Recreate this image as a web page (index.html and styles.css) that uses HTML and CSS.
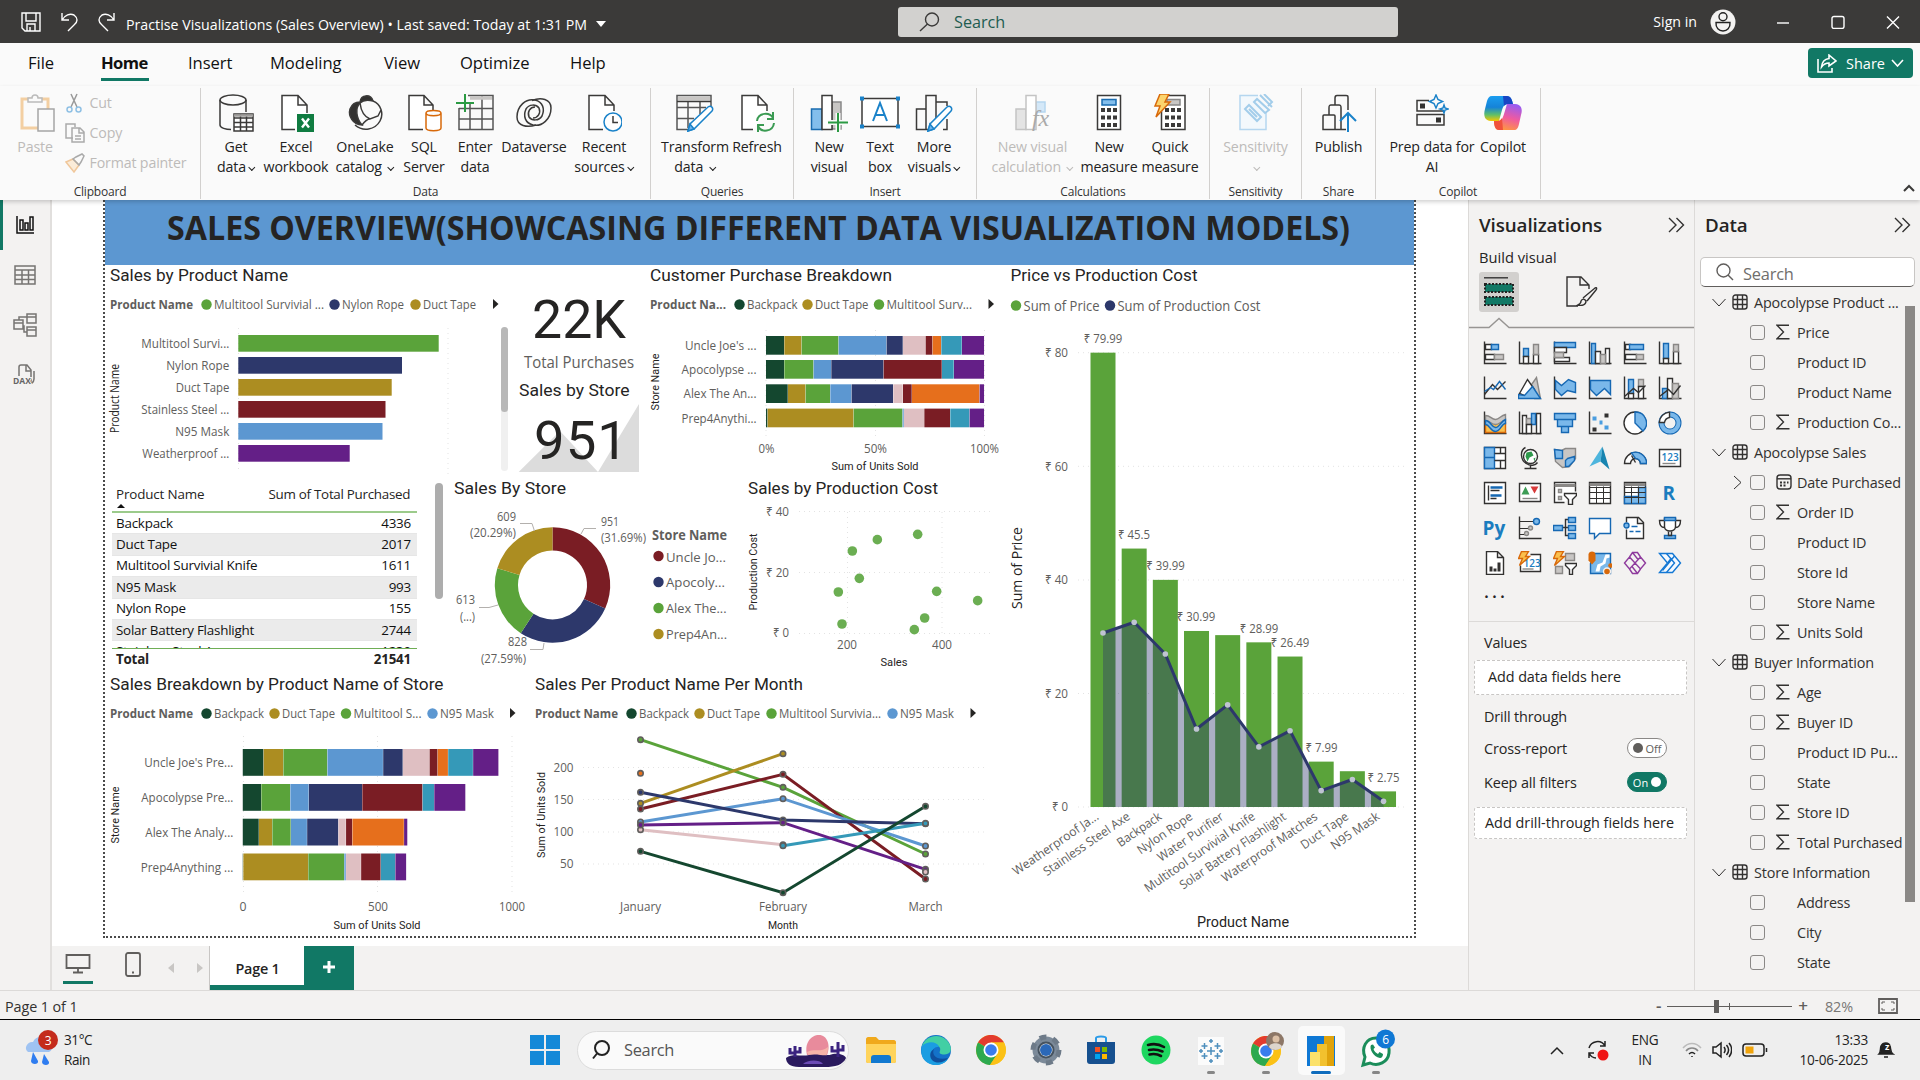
FILE: index.html
```html
<!DOCTYPE html>
<html lang="en">
<head>
<meta charset="utf-8">
<title>Practise Visualizations (Sales Overview)</title>
<link rel="stylesheet" href="styles.css">
</head>
<body>
<div class="app">
  <header class="titlebar">
    <div class="quick">
      <svg width="20" height="20" viewBox="0 0 20 20"><path d="M1 1H19V19H4L1 16ZM5 1V9H15V1M6 19V12H14V19M9 15V19"/></svg>
      <svg width="17" height="20" viewBox="0 0 17 20"><path d="M1 1V8H8M1 8C4 3 9 1 13 3C17 6 17 10 13 13L7 19"/></svg>
      <svg width="17" height="20" viewBox="0 0 17 20"><path d="M16 1V8H9M16 8C13 3 8 1 4 3C0 6 0 10 4 13L10 19"/></svg>
    </div>
    <div class="doc">Practise Visualizations (Sales Overview) • Last saved: Today at 1:31 PM <i class="tri"></i></div>
    <div class="topsearch">
      <svg width="21" height="20" viewBox="0 0 21 20"><circle cx="13" cy="7.500" r="6.500"/><path d="M8.500 12L1 19"/></svg>Search
    </div>
    <div class="account">
      <span>Sign in</span>
      <svg width="26" height="26" viewBox="0 0 26 26"><circle cx="13" cy="13" r="12.500" fill="#f3f2f1" stroke="none"/><circle cx="13" cy="7.800" r="4" stroke="#222"/><path d="M6 13.500H20C20.500 19 17 22 13 22C9 22 5.500 19 6 13.500Z" stroke="#222"/></svg>
      <svg width="14" height="14" viewBox="0 0 14 14"><path d="M1 8H13"/></svg>
      <svg width="14" height="14" viewBox="0 0 14 14"><rect x="1" y="1.500" width="12" height="12" rx="2"/></svg>
      <svg width="14" height="14" viewBox="0 0 14 14"><path d="M1 1.500L13 13.500M13 1.500L1 13.500"/></svg>
    </div>
  </header>

  <nav class="tabs">
    <span class="t-file">File</span><span class="t-home on">Home</span><span class="t-insert">Insert</span><span class="t-model">Modeling</span><span class="t-view">View</span><span class="t-opt">Optimize</span><span class="t-help">Help</span>
    <button class="share">
      <svg width="20" height="19" viewBox="0 0 20 19"><path d="M1 5V18H15V14M12 1L19 7L12 12V9C8 9 6 11 4.500 13C5 8 8 5 12 4.500Z"/></svg>Share<svg width="13" height="8" viewBox="0 0 13 8"><path d="M1 1L6.500 7L12 1"/></svg>
    </button>
  </nav>

  <section class="ribbon">
    <div class="group g-clip">
      <div class="clip">
        <div class="tool off">
          <svg width="36" height="38" viewBox="0 0 36 38"><path d="M2 5H28V34H2Z" stroke="#f3cfa2" stroke-width="3"/><path d="M8 8V4H12C12 0 18 0 18 4H22V8Z" stroke="#bbb" fill="#fafafa"/><path d="M18 15H34V37H18Z" stroke="#a5a5a5" fill="#fafafa"/></svg>
          <span>Paste</span>
        </div>
        <div class="cliplist">
          <div><svg width="20" height="20" viewBox="0 0 20 20"><path d="M6 1L12 14M12 1L6 14" stroke="#999"/><circle cx="4.500" cy="16.500" r="2.500" stroke="#8fc0e4"/><circle cx="13.500" cy="16.500" r="2.500" stroke="#8fc0e4"/></svg>Cut</div>
          <div><svg width="20" height="20" viewBox="0 0 20 20"><path d="M8 15H1V1H10V4M7 5H15L19 9V19H7ZM14 5V10H19M10 13H16M10 16H16" stroke="#aaa"/></svg>Copy</div>
          <div><svg width="20" height="20" viewBox="0 0 20 20"><path d="M1 9L8 6L14 12L9 19Z" stroke="#f0c79b" fill="#fbecd9"/><path d="M8 6L14 12L16 9L19 3L17 1L11 4Z" stroke="#aaa"/></svg>Format painter</div>
        </div>
      </div>
      <h6>Clipboard</h6>
    </div>

    <div class="group g-data">
      <div class="tools">
        <div class="tool"><svg width="36" height="38" viewBox="0 0 36 38"><ellipse cx="15" cy="6" rx="13" ry="5"/><path d="M2 6V31C2 34 8 35.500 13 35.500M28 6V18"/><path d="M16 20H35V37H16ZM16 24H35M16 28.500H35M16 33H35M22.500 20V37M28.500 20V37" fill="#fff"/><path d="M16 21.500H35" stroke="#a19f9d" stroke-width="2.500"/></svg><span>Get<br>data<b class="car"></b></span></div>
        <div class="tool"><svg width="36" height="38" viewBox="0 0 36 38"><path d="M17 35.500H4V1.500H20L29 11V19M20 1.500V11H29" fill="#fff"/><rect x="19" y="20" width="17" height="18" fill="#107c41" stroke="none"/><path d="M24 24.500L31 33.500M31 24.500L24 33.500" stroke="#fff" stroke-width="2.400"/></svg><span>Excel<br>workbook</span></div>
        <div class="tool"><svg width="36" height="38" viewBox="0 0 36 38"><path d="M13 8C14 0 24 0 26 7C22 6 16 6 13 9C8 14 9 24 15 31C6 31 1 22 3 15C5 10 9 8 13 8Z" fill="#323130"/><path d="M26 7C34 10 37 20 33 27C28 36 16 38 8 31M13 9C14 17 18 23 23 25L31 22L34 16M15 31C18 27 20 25 23 25"/></svg><span>OneLake<br>catalog <b class="car"></b></span></div>
        <div class="tool"><svg width="36" height="38" viewBox="0 0 36 38"><path d="M17 35.500H3V1.500H18L27 11V16M18 1.500V11H27" fill="#fff"/><path d="M20 19C20 15.500 35 15.500 35 19V34C35 37.500 20 37.500 20 34ZM20 19C20 22.500 35 22.500 35 19" stroke="#d8690a" fill="#fff"/></svg><span>SQL<br>Server</span></div>
        <div class="tool"><svg width="38" height="38" viewBox="0 0 38 38"><path d="M12 1.500H37V35.500H3V14M3 25H37M3 14.500H37M14 10V35M26 2V35" stroke="#555"/><path d="M14 4H36" stroke="#c8c6c4" stroke-width="3.500"/><path d="M9 0V18M0 9H18" stroke="#2b9a43" stroke-width="2"/></svg><span>Enter<br>data</span></div>
        <div class="tool"><svg width="38" height="38" viewBox="0 0 38 38"><path d="M21 31C12 34 2 32 2 23C2 12 11 4 20 6C28 8 30 15 27 22C24 27 17 27 14 23C12 18 15 13 20 13"/><path d="M17 6.500C26 3 36 5 36 14C36 25 27 33 18 31C10 29 8 22 11 15C14 10 21 10 24 14C26 19 23 24 18 24"/></svg><span>Dataverse</span></div>
        <div class="tool"><svg width="36" height="38" viewBox="0 0 36 38"><path d="M17 35.500H3V1.500H19L28 11V17M19 1.500V11H28" fill="#fff"/><circle cx="27" cy="28" r="9" stroke="#1a82c9" fill="#fff"/><path d="M27 22V28.500H32"/></svg><span>Recent<br>sources<b class="car"></b></span></div>
      </div>
      <h6>Data</h6>
    </div>

    <div class="group g-query">
      <div class="tools">
        <div class="tool"><svg width="38" height="38" viewBox="0 0 38 38"><path d="M12 35.500H1V1.500H35V12M1 13.500H30M1 24.500H18M12 7V34M24 7V20" fill="none" stroke="#555"/><path d="M2 4.500H34" stroke="#c8c6c4" stroke-width="4"/><path d="M1 7.500H35" /><path d="M12 37L14 30L32 13C35 11 38 14 36 17L18 35Z" stroke="#1a82c9" fill="#fff"/><path d="M12 37L14 30L18 35Z" stroke="#1a82c9" fill="#6cb4ee"/></svg><span>Transform<br>data <b class="car"></b></span></div>
        <div class="tool"><svg width="36" height="38" viewBox="0 0 36 38"><path d="M14 35.500H3V1.500H19L28 11V17M19 1.500V11H28" fill="#fff"/><path d="M18 27C19 18 31 18 34 24M34 18V25H28M35 29C34 38 22 39 19 32M19 38V31H25" stroke="#3a9a52" stroke-width="2"/></svg><span>Refresh</span></div>
      </div>
      <h6>Queries</h6>
    </div>

    <div class="group g-insert">
      <div class="tools">
        <div class="tool"><svg width="38" height="38" viewBox="0 0 38 38"><path d="M22 8H31V35H22Z" fill="#c8c6c4" stroke="#888"/><path d="M1.500 15H12V35.500H1.500Z" fill="#83beec" stroke="#1a6cb0"/><path d="M12 1.500H22V35.500H12Z" fill="#fff"/><path d="M28 19V38M18 28.500H38" stroke="#fafafa" stroke-width="5"/><path d="M28 19V38M18 28.500H38" stroke="#2b9a43" stroke-width="2"/></svg><span>New<br>visual</span></div>
        <div class="tool"><svg width="40" height="38" viewBox="0 0 40 38"><path d="M2 4.500H38V32.500H2Z" fill="#fff"/><path d="M0 2.500H4V6.500H0ZM36 2.500H40V6.500H36ZM0 30.500H4V34.500H0ZM36 30.500H40V34.500H36Z" fill="#1a82c9" stroke="none"/><path d="M13 27L20 9L27 27M15.500 21H24.500" stroke="#1a82c9" stroke-width="2"/></svg><span>Text<br>box</span></div>
        <div class="tool"><svg width="38" height="38" viewBox="0 0 38 38"><path d="M14 35.500H1.500V15H11M11 35V1.500H21V27M21 8H32V12M28 35.500H32V25" fill="none"/><path d="M13 37L15 30L32 13C35 11 38 14 36 17L19 35Z" stroke="#1a82c9" fill="#fff"/><path d="M13 37L15 30L19 35Z" stroke="#1a82c9" fill="#6cb4ee"/></svg><span>More<br>visuals<b class="car"></b></span></div>
      </div>
      <h6>Insert</h6>
    </div>

    <div class="group g-calc">
      <div class="tools">
        <div class="tool off"><svg width="38" height="38" viewBox="0 0 38 38"><path d="M22 8H31V18H22Z" fill="#d4e8f8" stroke="#b5d6ef"/><path d="M2 15H12V35.500H2Z" fill="#e4e4e4" stroke="#c4c4c4"/><path d="M12 1.500H22V35.500H12Z" fill="#fff" stroke="#c4c4c4"/><text x="18" y="32" class="fx">fx</text></svg><span>New visual<br>calculation <b class="car"></b></span></div>
        <div class="tool"><svg width="26" height="38" viewBox="0 0 26 38"><path d="M1.500 1.500H24.500V35.500H1.500Z" fill="#fff"/><path d="M6 5.500H20V11H6Z" fill="#83beec" stroke="#1a6cb0"/><path d="M5 16H21M5 23.500H21M5 31H21" stroke-width="4" stroke-dasharray="4 2"/></svg><span>New<br>measure</span></div>
        <div class="tool"><svg width="34" height="38" viewBox="0 0 34 38"><path d="M8.500 1.500H32V35.500H8.500Z" fill="#fff"/><path d="M14 5.500H27V11H14Z" fill="#c8c6c4" stroke="#888"/><path d="M12 16H28M12 23.500H28M12 31H28" stroke-width="4" stroke-dasharray="4 2"/><path d="M7 0H16L12 8H17L3 23L7 12H2Z" fill="#fbd46d" stroke="#d8690a"/></svg><span>Quick<br>measure</span></div>
      </div>
      <h6>Calculations</h6>
    </div>

    <div class="group g-sens">
      <div class="tools"><div class="tool off"><svg width="36" height="38" viewBox="0 0 36 38"><path d="M20 1.500H2V35.500H28V18" stroke="#b5d6ef" fill="#f3f8fc"/><path d="M7 15L11 11L23 23L19 27ZM11 15L19 23M16 8L19 5L31 16L27 19ZM22 1L34 13M26 0L34 8L30 12" stroke="#a3cdea" stroke-width="2"/></svg><span>Sensitivity<br><b class="car"></b></span></div></div>
      <h6>Sensitivity</h6>
    </div>
    <div class="group g-share">
      <div class="tools"><div class="tool"><svg width="36" height="38" viewBox="0 0 36 38"><path d="M2 35.500V22C2 21 2 21 3 21H13C14 21 14 21 14 22V35.500ZM8 21V14C8 12 8 11 10 11H18C20 11 20 12 20 14V35.500H14M14 11V4C14 2 15 1.500 16 1.500H25C27 1.500 27 2 27 4V16M20 35.500H25"/><path d="M27 38V20M19 27L27 19L35 27" stroke="#1a82c9" stroke-width="2"/></svg><span>Publish</span></div></div>
      <h6>Share</h6>
    </div>
    <div class="group g-cop">
      <div class="tools">
        <div class="tool"><svg width="34" height="38" viewBox="0 0 34 38"><path d="M14 6.500H2V17H29M2 20.500H29V31H2Z" fill="none"/><path d="M5 9.500H10V14.500H5ZM21 23.500H26V28.500H21Z" fill="#323130" stroke="none"/><path d="M21 1L23 5.500L27.500 7.500L23 9.500L21 14L19 9.500L14.500 7.500L19 5.500ZM29 11L30 14L33 15L30 16L29 19L28 16L25 15L28 14Z" stroke="#1a82c9"/></svg><span>Prep data for<br>AI</span></div>
        <div class="tool"><svg width="40" height="38" viewBox="0 0 40 38">
          <defs><linearGradient id="c1" x1="0" y1="0" x2="0" y2="1"><stop offset="0" stop-color="#1a9df0"/><stop offset=".45" stop-color="#1583d8"/><stop offset=".75" stop-color="#5fbf6a"/><stop offset="1" stop-color="#f5c800"/></linearGradient><linearGradient id="c2" x1="0.600" y1="0" x2="0.300" y2="1"><stop offset="0" stop-color="#9a5cf0"/><stop offset=".5" stop-color="#ef5aa0"/><stop offset="1" stop-color="#ff9a3c"/></linearGradient></defs>
          <path d="M9 2H24C28 2 29 6 30 10H25C21 10 20 13 19 16L16 27H8C2 27 0 22 2 15L4 7C5 4 6 2 9 2Z" fill="url(#c1)" stroke="none"/><path d="M20 2H24C28 2 29 6 30 10H25C23 10 22 11 21 12Z" fill="#1746c4" stroke="none"/>
          <path d="M31 36H16C12 36 11 31 11 27H15C19 27 20 23 21 20L24 10H32C38 10 40 15 38 21L36 30C35 34 34 36 31 36Z" fill="url(#c2)" stroke="none"/><path d="M20 36H16C12 36 11 31 11 27H15C17 27 18 25 19 24Z" fill="#f0523c" stroke="none"/></svg><span>Copilot</span></div>
      </div>
      <h6>Copilot</h6>
    </div>
    <svg class="collapse" width="12" height="8" viewBox="0 0 12 8"><path d="M1 7L6 2L11 7" stroke-width="2"/></svg>
  </section>

  <div class="work">
    <aside class="rail">
      <div class="on"><svg width="20" height="20" viewBox="0 0 20 20"><path d="M2 1V18H19M5 5H8V15H5ZM10 8H13V15H10ZM15 2H18V15H15Z" stroke="#111"/></svg></div>
      <div><svg width="22" height="20" viewBox="0 0 22 20"><path d="M1 1H21V19H1ZM1 5H21M1 10H21M1 14.500H21M8 5V19M14.500 5V19"/></svg></div>
      <div><svg width="24" height="24" viewBox="0 0 24 24"><path d="M1 7H10V16H1ZM1 10H10M14 1H23V10H14ZM14 4H23M14 14H23V23H14ZM14 17H23M6 7V4H14M10 13H11V19H14"/></svg></div>
      <div><svg width="24" height="24" viewBox="0 0 24 24"><path d="M6 13V4C6 2 7 2 8 2H14L18 7V18C18 20 17 20 16 21M13 2V8H18M21 8V16C21 19 19 20 18 21"/><text x="0" y="21" class="dax">DAX</text></svg></div>
    </aside>

    <main class="center">
      <div class="canvas">
        <div class="report">
          <svg class="banner" id="banner"></svg>
          <div class="body">
            <div class="left">
              <div class="row">
                <svg id="v-product"></svg><svg id="v-cards"></svg><svg id="v-customer"></svg>
              </div>
              <div class="row">
                <div class="tablevis">
                  <div class="tclip">
                    <table>
                      <thead><tr><th>Product Name<i class="sort"></i></th><th>Sum of Total Purchased</th></tr></thead>
                      <tbody>
                        <tr><td>Backpack</td><td>4336</td></tr>
                        <tr><td>Duct Tape</td><td>2017</td></tr>
                        <tr><td>Multitool Survivial Knife</td><td>1611</td></tr>
                        <tr><td>N95 Mask</td><td>993</td></tr>
                        <tr><td>Nylon Rope</td><td>155</td></tr>
                        <tr><td>Solar Battery Flashlight</td><td>2744</td></tr>
                        <tr><td>Stainless Steel Axe</td><td>1230</td></tr>
                      </tbody>
                    </table>
                  </div>
                  <div class="total"><span>Total</span><span>21541</span></div>
                </div>
                <div class="tscroll"></div>
                <svg id="v-donut"></svg><svg id="v-scatter"></svg>
              </div>
              <div class="row">
                <svg id="v-stacked"></svg><svg id="v-lines"></svg>
              </div>
            </div>
            <svg id="v-price"></svg>
          </div>
        </div>
      </div>
      <div class="pages">
        <div class="devs"><span class="dev on"><svg width="26" height="20" viewBox="0 0 26 20"><path d="M1.500 1H24.500V14H1.500ZM13 14V18M8 18.500H18"/></svg></span>
        <svg width="16" height="25" viewBox="0 0 16 25"><rect x="1" y="1" width="14" height="23" rx="2"/><path d="M7 20.500H9"/></svg>
        <i class="pl"></i><i class="pr"></i></div>
        <div class="ptab">Page 1</div>
        <div class="padd"><svg width="12" height="12" viewBox="0 0 12 12"><path d="M6 0V12M0 6H12" stroke="#fff" stroke-width="3"/></svg></div>
      </div>
    </main>

    <aside class="pane viz">
      <h2>Visualizations<svg width="17" height="16" viewBox="0 0 17 16"><path d="M1 1L8 8L1 15M8.500 1L15.500 8L8.500 15"/></svg></h2>
      <h3>Build visual</h3>
      <div class="modes">
        <span class="mode on"><svg width="30" height="30" viewBox="0 0 30 30"><path d="M0 0.800H24" stroke="#333"/><path d="M1 7H29V15H1ZM1 20H29V28H1Z" fill="#117865" stroke="#222" stroke-width="2" stroke-dasharray="2 1.500"/></svg></span>
        <span class="mode"><svg width="32" height="32" viewBox="0 0 32 32"><path d="M12 30H1V1H15L23 9V13M14 1V9H23M12 29C16 30 20 29 20 25C18 22 16 23 15 25C15 27 14 28 12 29ZM17 22L29 12C31 11 31 13 30 14L21 25"/></svg></span>
      </div>
      <svg class="notch" width="225" height="12" viewBox="0 0 225 12"><path d="M0 10.500H20L30 1.500L40 10.500H225" stroke="#979593"/></svg>
      <div class="vgrid" id="vgrid"></div>
      <div class="more">· · ·</div>
      <div class="wells">
        <p>Values</p>
        <div class="well w1">Add data fields here</div>
        <p class="drill">Drill through</p>
        <div class="opt"><span>Cross-report</span><span class="tog"><i></i>Off</span></div>
        <div class="opt"><span>Keep all filters</span><span class="tog on">On<i></i></span></div>
        <div class="well w2">Add drill-through fields here</div>
      </div>
    </aside>

    <aside class="pane data">
      <h2>Data<svg width="17" height="16" viewBox="0 0 17 16"><path d="M1 1L8 8L1 15M8.500 1L15.500 8L8.500 15"/></svg></h2>
      <div class="dsearch"><svg width="18" height="18" viewBox="0 0 18 18"><circle cx="7.500" cy="7.500" r="6.500"/><path d="M12 12L17 17"/></svg>Search</div>
      <div class="treebox"><div class="tree" id="tree"></div><div class="tbar"></div></div>
    </aside>
  </div>

  <footer class="status">
    <span>Page 1 of 1</span>
    <div class="zoomer"><b>-</b><span class="slider"><i></i><em></em></span><b>+</b><span class="pct">82%</span>
      <svg width="20" height="16" viewBox="0 0 20 16"><path d="M1 1H19V15H1Z"/><path d="M4 6V4H7M13 4H16V6M16 10V12H13M7 12H4V10" stroke-width="1"/></svg></div>
  </footer>

  <footer class="taskbar">
    <div class="weather">
      <svg width="34" height="34" viewBox="0 0 34 34"><path d="M4 19C-1 15 4 8 9 9C12 2 21 3 23 9C29 9 30 17 25 19Z" fill="#9fc3f2"/><path d="M9 19L14 28C15 32 7 32 7 28ZM20 21L25 29C26 33 18 33 18 29Z" fill="#2f7df0"/><circle cx="24" cy="7" r="10" fill="#c42b1c"/><text x="24" y="11.500" class="bad">3</text></svg>
      <span>31°C<br>Rain</span>
    </div>
    <svg class="start" width="30" height="30" viewBox="0 0 30 30"><path d="M0 0H14V14H0ZM16 0H30V14H16ZM0 16H14V30H0ZM16 16H30V30H16Z" fill="#1489d8"/></svg>
    <div class="tsearch">
      <svg width="19" height="20" viewBox="0 0 19 20"><circle cx="10" cy="8" r="7" fill="none" stroke="#222" stroke-width="2"/><path d="M5 13.500L1 18.500" stroke="#222" stroke-width="2"/></svg><span>Search</span>
      <svg width="62" height="34" viewBox="0 0 62 34"><path d="M22 22C19 10 26 2 34 2C42 2 46 12 42 22Z" fill="#e88b9c"/><path d="M22 19C30 15 36 20 43 14C43 22 40 25 34 26C27 26 24 24 22 19Z" fill="#f6b3a8"/><path d="M1 25C8 20 16 24 24 22C32 20 40 24 48 21C54 20 60 22 61 25C58 32 50 34 40 34H14C5 34 1 30 1 25Z" fill="#2a1a5e"/><path d="M10 24V13M5 15V20H10M15 14V19H10M53 24V9M47 13V18H53M58 12V17H53" stroke="#3b2380" stroke-width="3" fill="none"/><path d="M18 31C22 27 34 26 38 31Z" fill="#6b4bb5"/></svg>
    </div>
    <div class="apps">
      <span><svg viewBox="0 0 32 32"><path d="M1 5C1 4 2 3 3 3H11L14 6H29C30 6 31 7 31 8V27C31 28 30 29 29 29H3C2 29 1 28 1 27Z" fill="#f0a91c"/><path d="M1 10H31V27C31 28 30 29 29 29H3C2 29 1 28 1 27Z" fill="#ffd45c"/><path d="M6 29V24C6 22 7 21 9 21H23C25 21 26 22 26 24V29Z" fill="#1279d0"/></svg></span>
      <span><svg viewBox="0 0 32 32"><circle cx="16" cy="16" r="15" fill="#1472c9"/><path d="M2 12C6 0 24 -2 30 11C33 18 28 22 21 20C18 19 21 17 20 14C18 9 8 8 2 14Z" fill="#42cfa4"/><path d="M2 12C7 7 17 7 19 13C12 12 10 20 15 25C19 29 25 27 28 25C22 34 6 33 2 22C1 18 1 15 2 12Z" fill="#1b9de2"/><path d="M14 15C11 21 17 27 28 24C25 28 17 31 12 26C9 22 10 17 14 15Z" fill="#0f4f9e"/></svg></span>
      <span><svg viewBox="0 0 32 32"><use href="#chrome"/></svg></span>
      <span><svg viewBox="0 0 32 32"><circle cx="16" cy="16" r="10.500" fill="none" stroke="#7c8a99" stroke-width="6"/><circle cx="16" cy="16" r="13" fill="none" stroke="#6d7a88" stroke-width="5" stroke-dasharray="6.800 6.810"/><circle cx="16" cy="16" r="6" fill="#2b68b8"/><circle cx="16" cy="16" r="7.500" fill="none" stroke="#45525f" stroke-width="2"/></svg></span>
      <span><svg viewBox="0 0 32 32"><path d="M11 8V4C11 2 21 2 21 4V8" fill="none" stroke="#2b9be8" stroke-width="2"/><path d="M2 8H30V27C30 29 29 30 27 30H5C3 30 2 29 2 27Z" fill="#16508f"/><path d="M10 13H15V18H10Z" fill="#f25022"/><path d="M17 13H22V18H17Z" fill="#7fba00"/><path d="M10 20H15V25H10Z" fill="#00a4ef"/><path d="M17 20H22V25H17Z" fill="#ffb900"/></svg></span>
      <span><svg viewBox="0 0 32 32"><circle cx="16" cy="16" r="14.500" fill="#1ed760"/><path d="M8 11C13 9.500 19 10 24 13M9 16C14 14.700 18 15.500 22.500 17.500M9.500 20.500C14 19.500 17.500 20 21 22" fill="none" stroke="#111" stroke-width="2.600" stroke-linecap="round"/></svg></span>
      <span class="run"><svg viewBox="0 0 32 32"><path d="M3 2H29V30H3Z" fill="#fbfbfb"/><path d="M16 12V20M12 16H20M9.500 8V14M6.500 11H12.500M22.500 8V14M19.500 11H25.500M9.500 18V24M6.500 21H12.500M22.500 18V24M19.500 21H25.500M16 4V8M14 6H18M16 24V28M14 26H18M6 14V18M4 16H8M26 14V18M24 16H28" stroke="#4e8fbd" stroke-width="1.500"/></svg></span>
      <span class="run"><svg viewBox="0 0 32 32"><use href="#chrome"/><circle cx="25" cy="6" r="9" fill="#8d7767"/><circle cx="26" cy="4" r="3.500" fill="#dcc0a6"/><path d="M19 12C20 7 31 7 32 12C29 16 22 16 19 12Z" fill="#ddd5cd"/></svg></span>
      <span class="run act"><svg viewBox="0 0 32 32"><path d="M2 1H30V31H2Z" fill="#0f78d4"/><path d="M19 1H29V31H19Z" fill="#e0a30c"/><path d="M12 9H22V31H12Z" fill="#f2c12e"/><path d="M5 17H15V31H5Z" fill="#fbe16a"/></svg></span>
      <span class="run"><svg viewBox="0 0 32 32"><path d="M3 30L5 22C1 13 6 3 16 3C25 3 30 10 29 18C28 27 18 32 10 28Z" fill="#fff" stroke="#1b8d5a" stroke-width="3"/><path d="M11 10C9 13 13 22 20 23C22 23 23 21 23 19L19.500 17L18 19C16 18 14 16 13.500 14L15 12.500L13 9.500Z" fill="#1b8d5a"/><circle cx="25.500" cy="4" r="9.500" fill="#0f78d4"/><text x="25.500" y="8.500" class="bad">6</text></svg></span>
    </div>
    <div class="tray">
      <svg class="i1" width="14" height="9" viewBox="0 0 14 9"><path d="M1 8L7 2L13 8"/></svg>
      <svg class="i2" width="22" height="22" viewBox="0 0 22 22"><path d="M2 9C4 2 14 0 18 7M18 2V7H13M2 14C4 18 6 19 9 19M2 19V14H7"/><circle cx="16" cy="16" r="5.500" fill="#f01515" stroke="none"/></svg>
      <span class="lang">ENG<br>IN</span>
      <svg class="i3" width="20" height="16" viewBox="0 0 20 16"><path d="M1 6C6 0 14 0 19 6" stroke="#bbb"/><path d="M4 9C7 5 13 5 16 9" stroke="#888"/><path d="M7 12C9 10 11 10 13 12M10 14V15"/></svg>
      <svg class="i4" width="20" height="18" viewBox="0 0 20 18"><path d="M1 6H4L9 2V16L4 12H1ZM12 6C13.500 8 13.500 10 12 12M14.500 4C17 7 17 11 14.500 14M17 2C20.500 6 20.500 12 17 16"/></svg>
      <svg class="i5" width="26" height="14" viewBox="0 0 26 14"><rect x="1" y="1" width="21" height="12" rx="3"/><path d="M24.500 5V9"/><rect x="3.500" y="3.500" width="8" height="7" fill="#f0a30a" stroke="none"/></svg>
      <span class="clock">13:33<br>10-06-2025</span>
      <svg class="i6" width="18" height="20" viewBox="0 0 18 20"><path d="M2 14C4 12 3 9 4 6C6 2 12 2 13 6C14 9 13 12 16 14ZM7 17H11" fill="#222"/><text x="8" y="10" class="zz">z</text></svg>
    </div>
  </footer>
</div>
<svg class="defs" width="0" height="0"><defs><g id="chrome"><circle cx="16" cy="16" r="15" fill="#fbc116"/><path d="M16 16L3 8.500C9 -1.500 23 -1.500 29 8.500H16Z" fill="#e33b2e"/><path d="M3 8.500L16 16L15 31C3 30 -2 18 3 8.500Z" fill="#2da94f"/><path d="M9.500 19.700L22.500 19.700L15 31Z" fill="#2da94f"/><path d="M22.500 19.700L15 31C28 31.500 34 19 29 8.500H16Z" fill="#fbc116"/><circle cx="16" cy="16" r="7.500" fill="#fff"/><circle cx="16" cy="16" r="5.800" fill="#3a7cec"/></g></defs></svg>
<script src="app.js"></script>
</body>
</html>
```
FILE: styles.css
```css
* { box-sizing: border-box; }
body { margin: 0; font-family: "Open Sans", "Noto Sans", sans-serif; color: #252423; overflow: hidden; }
h2, h3, h6, p, table { margin: 0; }
svg { display: block; flex: none; }
.app { width: 1920px; height: 1080px; display: flex; flex-direction: column; }
.defs { position: absolute; }

/* title bar */
.titlebar { height: 43px; background: #3b3a39; color: #fff; display: flex; align-items: center; flex: none; }
.titlebar svg { fill: none; stroke: #fff; stroke-width: 1.4; }
.quick { display: flex; gap: 20px; padding-left: 21px; width: 126px; }
.doc { width: 772px; font-size: 14.2px; letter-spacing: .02px; padding-top: 5px; display: flex; align-items: center; white-space: pre; }
.tri { margin-left: 5px; border: 5px solid transparent; border-top: 6px solid #fff; border-bottom: 0; }
.topsearch { width: 500px; height: 30px; background: #d2d1cf; border-radius: 3px; color: #215c4f; font-size: 16.2px; display: flex; align-items: center; gap: 14px; padding-left: 21px; }
.topsearch svg { stroke: #3b3a39; }
.account { display: flex; align-items: center; margin-left: auto; padding-right: 20px; }
.account span { font-size: 14.2px; margin-right: 13px; }
.account svg:nth-of-type(1) { margin-right: 40px; }
.account svg:nth-of-type(2), .account svg:nth-of-type(3) { margin-right: 41px; }

/* ribbon tabs */
.tabs { height: 43px; background: #fafafa; display: flex; font-size: 16.6px; flex: none; letter-spacing: -.05px; color: #111; }
.tabs span { padding-top: 8px; height: 38px; margin-right: 39px; white-space: nowrap; }
.tabs .t-file { width: 34px; margin-left: 28px; }
.tabs .t-home { width: 48px; }
.tabs .t-insert { width: 43px; }
.tabs .t-model { width: 75px; }
.tabs .t-view { width: 37px; }
.tabs .t-opt { width: 71px; }
.tabs .on { font-weight: 700; border-bottom: 3px solid #117865; letter-spacing: -.6px; }
.share { margin: 5px 7px 0 auto; width: 105px; height: 30px; border: 0; border-radius: 4px; background: #117865; color: #fff; font: 14.5px "Open Sans", sans-serif; display: flex; align-items: center; gap: 6px; padding: 0 0 0 9px; }
.share svg { fill: none; stroke: #fff; stroke-width: 1.6; }
.share svg:first-child { margin-right: 3px; }

/* ribbon */
.ribbon { height: 114px; background: #fafafa; display: flex; position: relative; flex: none; box-shadow: 0 2px 4px rgba(0,0,0,.18); z-index: 2; }
.group { height: 111px; margin-top: 2px; border-right: 1px solid #d2d0ce; display: flex; flex-direction: column; justify-content: space-between; }
.group h6 { font-size: 12px; font-weight: 400; text-align: center; letter-spacing: -.2px; line-height: 15px; color: #333; }
.group svg, .collapse { fill: none; stroke: #3b3a39; stroke-width: 1.5; }
.tools { display: grid; justify-content: start; padding-top: 6px; }
.tool { display: flex; flex-direction: column; align-items: center; font-size: 14.2px; line-height: 20px; letter-spacing: -.15px; text-align: center; white-space: nowrap; min-width: 0; color: #222; }
.tool span { margin-top: 5px; }
.off, .cliplist { color: #bdbbb9; }
.car { display: inline-block; width: 5px; height: 5px; border: solid currentColor; border-width: 0 1.6px 1.6px 0; transform: rotate(45deg) translate(-2px, -1px); margin-left: 4px; }
.fx { font: italic 24px "Liberation Serif", serif; fill: #aaa; stroke: none; }
.g-clip { width: 201px; }
.clip { display: flex; padding: 6px 0 0 16px; gap: 11px; }
.clip .tool { width: 38px; }
.clip .tool svg { margin-left: 6px; }
.cliplist { font-size: 14.2px; letter-spacing: -.15px; white-space: nowrap; line-height: 30px; margin-top: -6px; }
.cliplist div { display: flex; align-items: center; gap: 4.5px; height: 30px; }
.g-data { width: 450px; }
.g-data .tools { grid-template-columns: 60px 60px 78px 40px 62px 56px 84px; padding-left: 5px; }
.g-query { width: 143px; }
.g-query .tools { grid-template-columns: 62px 62px; padding-left: 13px; }
.g-insert { width: 183px; }
.g-insert .tools { grid-template-columns: 52px 50px 58px; padding-left: 9px; }
.g-calc { width: 233px; }
.g-calc .tools { grid-template-columns: 91px 62px 60px; padding-left: 10px; }
.g-sens { width: 92px; }
.g-share { width: 74px; }
.g-sens .tools, .g-share .tools { grid-template-columns: 100%; justify-content: stretch; }
.g-cop { width: 165px; }
.g-cop .tools { grid-template-columns: 86px 56px; padding-left: 13px; }
.collapse { position: absolute; right: 5px; bottom: 8px; }

/* work area */
.work { display: flex; height: 791px; flex: none; border-bottom: 1px solid #dcdad8; background: #f3f2f1; }
.rail { width: 52px; border-right: 2px solid #e1dfdd; }
.rail div { height: 50px; display: flex; align-items: center; justify-content: center; border-left: 3px solid transparent; padding-right: 3px; }
.rail .on { border-left-color: #117865; }
.rail svg { fill: none; stroke: #767472; stroke-width: 1.5; }
.dax { font: 700 8.5px "Open Sans", sans-serif; fill: #666; stroke: #f3f2f1; stroke-width: 2px; paint-order: stroke; }
.center { width: 1416px; display: flex; flex-direction: column; }
.canvas { height: 746px; background: #fff; padding-left: 51px; overflow: hidden; }
.report { width: 1313px; height: 738px; border: 2px dotted #4a4a4a; border-top: 0; }
.body, .row { display: flex; }
.left { width: 895px; }
.report svg { overflow: visible; }
.report text { fill: #605e5c; font-family: "Open Sans", "Noto Sans", sans-serif; }
.report .din { font-family: Roboto, sans-serif; fill: #252423; }
.report .ttl { fill: #252423; }
.bold { font-weight: 700; }
.grid { stroke: #e3e3e3; stroke-width: 1; stroke-dasharray: 1 4; fill: none; }
.lead { stroke: #b3b0ad; stroke-width: 1; fill: none; }

/* table visual */
.tablevis { width: 312px; height: 196px; padding: 8px 0 0 7px; font-size: 13.4px; letter-spacing: -.22px; white-space: nowrap; }
.tclip { height: 165px; overflow: hidden; border-bottom: 1.5px solid #6fae55; }
.tablevis table { width: 305px; border-collapse: separate; border-spacing: 0; table-layout: fixed; }
.tablevis th { font-weight: 400; text-align: left; height: 29px; padding: 0 7px 7px 4px; border-bottom: 2px solid #9ccb8b; vertical-align: middle; letter-spacing: -.15px; line-height: 16px; position: relative; }
.tablevis th:last-child { letter-spacing: -.28px; }
.tablevis th:last-child, .tablevis td:last-child { text-align: right; }
.tablevis td { height: 21.4px; padding: 0 6px 0 4px; line-height: 19px; border-bottom: 1px solid #e6e6e6; color: #111; }
.tablevis tr:nth-child(even) td { background: #ebebeb; }
.sort { position: absolute; left: 5px; bottom: 3px; border: 4.5px solid transparent; border-bottom: 4.5px solid #111; border-top: 0; }
.total { display: flex; justify-content: space-between; font-weight: 700; padding: 1px 6px 0 4px; line-height: 19px; }
.tscroll { width: 8px; height: 116px; border-radius: 4px; background: #adadad; margin: 7px 4px 0 18px; }

/* page tabs */
.pages { display: flex; height: 44px; }
.devs { width: 158px; display: flex; align-items: center; padding-left: 11px; border-right: 1px solid #c8c6c4; }
.devs svg { fill: none; stroke: #605e5c; stroke-width: 1.8; margin-top: -8px; }
.dev { width: 30px; height: 30px; border-bottom: 3px solid #117865; display: flex; justify-content: center; padding-top: 7px; margin-top: 2px; margin-right: 32px; }
.dev svg { margin-top: -7px; }
.pl, .pr { border: 5px solid transparent; border-width: 5px 0; }
.pl { border-right: 6px solid #c8c6c4; margin-left: 27px; }
.pr { border-left: 6px solid #c8c6c4; margin-left: 23px; }
.ptab { width: 94px; background: #fff; border-bottom: 5px solid #117865; text-align: center; line-height: 45px; font-size: 14.4px; font-weight: 600; letter-spacing: -.2px; padding-left: 1px; }
.padd { width: 50px; background: #117865; display: flex; align-items: center; justify-content: center; }
.padd svg { margin-top: -2px; }

/* right panes */
.pane { width: 226px; border-left: 1px solid #dcdad8; overflow: hidden; }
.pane svg { fill: none; stroke: #323130; stroke-width: 1.4; }
.pane h2 { font-size: 18.8px; font-weight: 600; height: 46px; line-height: 46px; padding: 3px 9px 0 10px; display: flex; justify-content: space-between; align-items: center; letter-spacing: -.1px; }
.pane h3 { font-size: 14.7px; font-weight: 500; padding-left: 10px; line-height: 22px; height: 24px; }
.modes { display: flex; gap: 43px; padding: 2px 0 0 10px; }
.mode { width: 40px; height: 40px; display: flex; align-items: center; justify-content: center; border-radius: 3px; }
.mode.on { background: #d2d0ce; }
.notch { margin-top: 5px; }
.vgrid { display: grid; grid-template-columns: repeat(6, 35px); grid-auto-rows: 35px; padding: 7px 0 0 8.5px; }
.vgrid svg { width: 24px; height: 24px; margin: 5px; }
.vgrid .b { stroke: #1668b3; fill: #7ab8ea; }
.vgrid .l { stroke: #1668b3; }
.vgrid .w { fill: #fff; }
.vgrid .bub { stroke: #1668b3; fill: #fff; }
.vgrid .y { stroke: #8a8886; fill: #c8c6c4; }
.vgrid .o { stroke: #d8690a; fill: #fbc04d; }
.vgrid .d { fill: #323130; stroke: none; }
.vgrid text { font: 600 10px "Open Sans", sans-serif; fill: #1a7dbf; stroke: none; }
.vgrid .big { font-size: 19px; font-weight: 700; }
.more { font-size: 18px; line-height: 22px; padding: 4px 0 0 15px; height: 41px; border-bottom: 1px solid #dcdad8; letter-spacing: -.8px; font-weight: 600; }
.wells { font-size: 14.4px; letter-spacing: .01px; color: #252423; padding: 10px 7px 0 5px; }
.wells p { padding-left: 10px; line-height: 22px; height: 24px; letter-spacing: -.15px; }
.well { background: #fff; border: 1.5px dashed #c8c6c4; border-radius: 3px; white-space: nowrap; }
.w1 { height: 35px; line-height: 31px; margin-top: 4px; padding-left: 13px; letter-spacing: -.08px; }
.w2 { height: 32px; line-height: 29px; margin-top: 8px; padding-left: 10px; }
.wells .drill { margin: 11px 0 1px; font-weight: 500; }
.opt { display: flex; justify-content: space-between; align-items: center; height: 34px; padding: 0 20px 0 10px; letter-spacing: -.12px; }
.tog { width: 40px; height: 20px; border: 1.5px solid #8a8886; border-radius: 10px; background: #fff; font-size: 11px; display: flex; align-items: center; justify-content: center; gap: 3px; color: #605e5c; letter-spacing: 0; }
.tog i { width: 10px; height: 10px; border-radius: 50%; background: #605e5c; }
.tog.on { background: #117865; border-color: #117865; color: #fff; }
.tog.on i { background: #fff; }
.dsearch { margin: 11px 5px 0 5px; height: 30px; background: #fff; border: 1px solid #c8c6c4; border-bottom-color: #605e5c; border-radius: 5px; display: flex; align-items: center; gap: 9px; padding: 3px 0 0 15px; font-size: 16.4px; color: #706e6c; letter-spacing: -.2px; }
.dsearch svg { stroke: #605e5c; margin-top: -3px; }
.treebox { display: flex; height: 702px; overflow: hidden; }
.tree { width: 210px; }
.tree div { height: 30px; display: flex; align-items: center; font-size: 14.4px; letter-spacing: -.17px; white-space: nowrap; color: #323130; }
.tree .tb { padding-left: 17px; gap: 6px; }
.tree .fd { padding-left: 55px; }
.tree .fd.ex { padding-left: 38px; }
.tree .fd.ex > svg:first-child { margin-right: 8px; }
.chk { width: 15px; height: 15px; border: 1px solid #8a8886; border-radius: 3px; margin-right: 11px; flex: none; }
.slot { width: 16px; margin-right: 5px; flex: none; }
.tbar { width: 10px; height: 596px; background: #8a8886; margin: 19px 0 0 0; }

/* status bar */
.status { height: 29px; background: #f3f2f1; border-bottom: 1px solid #000; display: flex; justify-content: space-between; align-items: center; padding: 2px 22px 0 5px; font-size: 14.4px; letter-spacing: -.1px; flex: none; color: #323130; }
.zoomer { display: flex; align-items: center; color: #605e5c; }
.zoomer b { font-size: 17px; line-height: 20px; font-weight: 600; }
.zoomer svg { fill: none; stroke: #605e5c; stroke-width: 1.8; }
.slider { width: 125px; height: 14px; margin: 0 6px; display: flex; align-items: center; background: linear-gradient(#605e5c, #605e5c) 0 7px / 125px 1px no-repeat; }
.slider i { width: 5px; height: 13px; background: #605e5c; margin-left: 47px; }
.slider em { width: 1px; height: 7px; background: #605e5c; margin-left: 10px; }
.pct { margin: 0 25px 0 17px; color: #797775; }

/* taskbar */
.taskbar { height: 60px; background: #eee; display: flex; align-items: center; flex: none; font-size: 13.6px; line-height: 20px; letter-spacing: -.3px; color: #222; }
.weather { width: 530px; display: flex; align-items: center; padding-left: 24px; gap: 6px; }
.weather span { letter-spacing: -.45px; }
.weather svg { margin-top: 0; overflow: visible; }
.bad { font: 12px "Open Sans", sans-serif; fill: #fff; text-anchor: middle; }
.start { margin-right: 17px; }
.tsearch { width: 272px; height: 39px; border-radius: 20px; background: #fafafa; border: 1px solid #dcdcdc; display: flex; align-items: center; padding-left: 14px; gap: 13px; font-size: 16.4px; color: #555; }
.tsearch svg:last-child { margin-left: auto; margin-right: 1px; }
.apps { display: flex; margin-left: 8px; height: 60px; align-items: center; }
.apps span { width: 47px; height: 49px; margin-right: 8.1px; display: flex; flex-direction: column; align-items: center; justify-content: center; border-radius: 5px; }
.apps svg { width: 32px; height: 32px; overflow: visible; }
.apps .run { padding-top: 7px; }
.apps .run::after { content: ""; width: 8px; height: 3px; border-radius: 2px; background: #868686; margin-top: 4px; margin-bottom: -2px; }
.apps .act { background: #fafafa; }
.apps .act::after { width: 20px; background: #0f6cbd; }
.tray { flex: 1; display: flex; align-items: center; justify-content: flex-end; padding-right: 25px; }
.tray svg { fill: none; stroke: #222; stroke-width: 1.5; }
.i2 { margin: 0 21px 0 23px; }
.lang { width: 30px; text-align: center; }
.i3 { margin: 0 10px 0 22px; }
.i5 { margin: 0 0 0 10px; }
.clock { width: 100px; text-align: right; letter-spacing: -.25px; }
.i6 { margin-left: 9px; }
.zz { font: 700 9px "Open Sans", sans-serif; fill: #fff; stroke: none; }
```
FILE: app.js
```js
const C = { dk: '#14472f', gold: '#ac8d21', green: '#5aa33a', blue: '#5c97d1', navy: '#2d386b', pink: '#dfbfc2', maroon: '#7a1d24', orange: '#e66f1c', teal: '#3599b8', purple: '#641f87' };

// Text fitted between x and x + w, with an optional class and extra attributes
const T = (x, y, s, size, w, cls = '', extra = '') =>
  `<text x="${x}" y="${y}" font-size="${size}" textLength="${w}" lengthAdjust="spacingAndGlyphs" class="${cls}" ${extra}>${s}</text>`;
const TR = (x, y, s, size, w, cls) => T(x - w, y, s, size, w, cls);
const TC = (x, y, s, size, w, cls) => T(x - w / 2, y, s, size, w, cls);
const TV = (x, cy, s, size, w, cls) => T(-w / 2, 4, s, size, w, cls, `transform="translate(${x} ${cy}) rotate(-90)"`);
const R = (x, y, w, h, f) => `<rect x="${x}" y="${y}" width="${w}" height="${h}" fill="${f}"/>`;
const DOT = (x, y, f, r = 5.2) => `<circle cx="${x}" cy="${y}" r="${r}" fill="${f}"/>`;
const G = (d) => `<path class="grid" d="${d}"/>`;
const ARROW = (x, y) => `<path d="M${x} ${y - 5}L${x + 5.500} ${y}L${x} ${y + 5}Z" fill="#252423"/>`;
const title = (x, y, s, w) => T(x, y, s, 17.4, w, 'din');

function legend(y, items) {
  return items.map(([x, s, w, c]) => c ? DOT(x - 7.500, y - 4.500, C[c]) + T(x, y, s, 12.600, w) : T(x, y, s, 12.600, w, 'bold')).join('');
}
function draw(id, x, y, w, h, content) {
  const el = document.getElementById(id);
  el.setAttribute('viewBox', `${x} ${y} ${w} ${h}`);
  el.setAttribute('width', w);
  el.setAttribute('height', h);
  el.innerHTML = content;
}
function stacks(rows, tops, h, toX) {
  return rows.map(([edges, cols], r) => cols.split(' ').map((c, i) =>
    R(toX(edges[i]), tops[r], toX(edges[i + 1]) - toX(edges[i]) - 0.3, h, C[c])).join('')).join('');
}
const ALL = 'dk gold green blue navy pink maroon orange teal purple';

draw('banner', 105, 200, 1309, 65, R(105, 200, 1309, 65, C.blue) +
  T(167, 240, 'SALES OVERVIEW(SHOWCASING DIFFERENT DATA VISUALIZATION MODELS)', 33.5, 1183, 'bold ttl'));

draw('v-product', 105, 265, 405, 211,
  title(110, 281, 'Sales by Product Name', 178) +
  legend(309, [[110, 'Product Name', 83], [214, 'Multitool Survivial ...', 110, 'green'], [342, 'Nylon Rope', 62, 'navy'], [423, 'Duct Tape', 53, 'gold']]) +
  ARROW(493, 304) + G('M238.5 328V472M448 328V478') +
  [['Multitool Survi...', 88, 438.7, 'green'], ['Nylon Rope', 63, 402, 'navy'], ['Duct Tape', 53.5, 391.7, 'gold'], ['Stainless Steel ...', 88, 385.5, 'maroon'], ['N95 Mask', 54, 382.5, 'blue'], ['Weatherproof ...', 87, 349.700, 'purple']]
    .map(([s, w, x, c], i) => TR(229.3, 348 + 22 * i, s, 12.800, w) + R(238.3, 335 + 22 * i, x - 238.3, 16.700, C[c])).join('') +
  TV(115, 398.5, 'Product Name', 12, 69, 'ttl') +
  '<rect x="501" y="327" width="7" height="144" rx="3.5" fill="#f0f0f0"/><rect x="501" y="327" width="7" height="85" rx="3.5" fill="#b8b8b8"/>');

draw('v-cards', 510, 265, 135, 211,
  T(532, 338, '22K', 54.5, 94, 'din') + TC(579, 368, 'Total Purchases', 15.500, 110) + title(519, 396, 'Sales by Store', 110.5) +
  '<path d="M518.7 472L560 431L598 472L639 404V472Z" fill="#dcdcdc"/>' +
  '<text x="534" y="459" font-size="54.5" textLength="94" lengthAdjust="spacing" class="din">951</text>');

draw('v-customer', 645, 265, 355, 211,
  title(650, 281, 'Customer Purchase Breakdown', 242) +
  legend(309, [[650, 'Product Na...', 76], [747, 'Backpack', 50.5, 'dk'], [815, 'Duct Tape', 53.5, 'gold'], [886.5, 'Multitool Surv...', 85.5, 'green']]) +
  ARROW(988.500, 304) + G('M766 330V440M875.5 330V440M984.500 330V440') +
  stacks([
    [[768, 823, 875, 986, 1130, 1179, 1247, 1268, 1294, 1356, 1423], ALL],
    [[768, 823, 911, 964, 1121, 1296, 1332, 1423], 'dk green blue navy maroon teal purple'],
    [[768, 834, 887, 961, 1025, 1150, 1179, 1206, 1409, 1423], 'dk gold green blue navy pink maroon orange purple'],
    [[768, 773, 1031, 1178, 1182, 1243, 1321, 1379, 1423], 'dk gold green blue pink maroon teal purple']
  ], [336, 360, 384.3, 408.600], 18.700, v => 510 + v / 3) +
  [["Uncle Joe's ...", 71.5], ['Apocolypse ...', 75], ['Alex The An...', 73], ['Prep4Anythi...', 75]].map(([s, w], i) => TR(756.500, 350 + 24.200 * i, s, 12.800, w)).join('') +
  TC(766.500, 453, '0%', 12.800, 16) + TC(875.500, 453, '50%', 12.800, 23) + TC(984.500, 453, '100%', 12.800, 29) +
  TC(875, 470, 'Sum of Units Sold', 11.500, 87, 'din') + TV(655, 382, 'Store Name', 11.500, 57, 'din'));

function ring(cx, cy, r1, r0, parts) {
  let a = 0;
  return parts.map(([p, c]) => {
    const b = a + p * 2 * Math.PI, f = (r, t) => `${cx + r * Math.sin(t)} ${cy - r * Math.cos(t)}`;
    const big = b - a > Math.PI ? 1 : 0;
    const d = `M${f(r1, a)}A${r1} ${r1} 0 ${big} 1 ${f(r1, b)}L${f(r0, b)}A${r0} ${r0} 0 ${big} 0 ${f(r0, a)}Z`;
    a = b;
    return `<path d="${d}" fill="${C[c]}"/>`;
  }).join('');
}
draw('v-donut', 447, 476, 293, 196,
  title(454, 494, 'Sales By Store', 112) +
  ring(552.500, 585, 57.700, 34.500, [[.3169, 'maroon'], [.2759, 'navy'], [.2043, 'green'], [.2029, 'gold']]) +
  '<path class="lead" d="M520 523.5H532L534.500 531M596 528.500H584L581 534M479 607.500H489L498 605M530 649.500H543L544 643"/>' +
  TR(516, 521, '609', 12.500, 19) + TR(516, 537, '(20.29%)', 12.500, 46) + T(601, 525.500, '951', 12.500, 18) + T(601, 542, '(31.69%)', 12.500, 45) +
  TR(475, 604, '613', 12.500, 19) + TR(475, 621, '(...)', 12.500, 15) + TR(527, 646, '828', 12.500, 19) + TR(526, 663, '(27.59%)', 12.500, 45) +
  T(652, 540, 'Store Name', 13.500, 75, 'bold') +
  [['Uncle Jo...', 60, 'maroon'], ['Apocoly...', 59, 'navy'], ['Alex The...', 60.500, 'green'], ['Prep4An...', 61, 'gold']].map(([s, w, c], i) => DOT(658.500, 556 + 26 * i, C[c]) + T(666, 561.500 + 25.700 * i, s, 13.500, w)).join(''));

draw('v-scatter', 740, 476, 260, 196,
  title(748, 494, 'Sales by Production Cost', 190) +
  G('M799 511.5H990M799 572.5H990M799 633.5H990M847.5 512V633M942 512V633') +
  TR(789, 516, '₹ 40', 12.800, 23) + TR(789, 577, '₹ 20', 12.800, 23) + TR(789, 637, '₹ 0', 12.800, 16) +
  TC(847, 649, '200', 12.800, 20) + TC(942, 649, '400', 12.800, 20) + TC(894, 666, 'Sales', 11.500, 27, 'din') + TV(753, 572, 'Production Cost', 11.500, 77, 'din') +
  [[637, 243], [712, 209], [833, 193], [658, 325], [595, 366], [890, 364], [1013, 392], [606, 462], [823, 479], [854, 444]].map(([x, y]) => DOT(640 + x / 3, 470 + y / 3, '#6bae52', 4.800)).join(''));

const hx = v => 100 + v / 1.7231;
draw('v-stacked', 105, 672, 420, 264,
  title(110, 690, 'Sales Breakdown by Product Name of Store', 333.500) +
  legend(718, [[110, 'Product Name', 83], [214, 'Backpack', 50, 'dk'], [282, 'Duct Tape', 53, 'gold'], [353.500, 'Multitool S...', 68, 'green'], [440, 'N95 Mask', 54, 'blue']]) +
  ARROW(510, 713) + G('M243.5 736V896M377.500 736V896M512 736V896') +
  stacks([
    [[246, 282, 316, 392, 488, 522, 568, 582, 600, 643, 687], ALL],
    [[246, 278, 328, 360, 452, 556, 576, 630], 'dk green blue navy maroon teal purple'],
    [[246, 274, 297, 329, 357, 411, 424, 435, 524, 530], 'dk gold green blue navy pink maroon orange purple'],
    [[246, 247, 359, 421, 424, 450, 484, 509, 528], 'dk gold green blue pink maroon teal purple']
  ], [749, 784, 818.700, 853.500], 26.800, hx) +
  [["Uncle Joe's Pre...", 89], ['Apocolypse Pre...', 92], ['Alex The Analy...', 88], ['Prep4Anything ...', 92.500]].map(([s, w], i) => TR(233.300, 767 + 35 * i, s, 12.800, w)).join('') +
  TC(243, 911, '0', 12.800, 7) + TC(378, 911, '500', 12.800, 20) + TC(512, 911, '1000', 12.800, 26) +
  TC(377, 928.500, 'Sum of Units Sold', 11.500, 87, 'din') + TV(115, 815, 'Store Name', 11.500, 57, 'din'));

const mx = [640.500, 783, 925.500], py = v => 670 + v / 3;
const series = [['green', 209, 352, 552], ['gold', 400, 251], ['maroon', 417, 313, 627], ['blue', 456, 386, 528], ['navy', 367, 450, 461], ['pink', 479, 524], ['teal', null, 527, 460], ['purple', 465, 458, 598], ['dk', 544, 668, 409]];
draw('v-lines', 525, 672, 475, 264,
  title(535, 690, 'Sales Per Product Name Per Month', 268) +
  legend(718, [[535, 'Product Name', 83], [639, 'Backpack', 50, 'dk'], [707, 'Duct Tape', 53, 'gold'], [779, 'Multitool Survivia...', 102, 'green'], [900, 'N95 Mask', 54, 'blue']]) +
  ARROW(970.500, 713) + G('M583 767.5H985M583 799.500H985M583 832H985M583 864H985') +
  [200, 150, 100, 50].map((v, i) => TR(573.500, 772 + 32.100 * i, v, 12.800, v > 50 ? 20 : 13.500)).join('') +
  series.map(([c, ...v]) => `<polyline fill="none" stroke="${C[c]}" stroke-width="3" points="${v.map((p, i) => p === null ? '' : mx[i] + ',' + py(p)).join(' ')}"/>`).join('') +
  [...series, ['orange', 310], ['pink', null, null, 606]].map(([c, ...v]) => v.map((p, i) => p === null ? '' : `<circle cx="${mx[i]}" cy="${py(p)}" r="2.7" fill="${C[c]}" stroke="#605e5c" stroke-width="1.6"/>`).join('')).join('') +
  TC(640.500, 911, 'January', 12.800, 41) + TC(783, 911, 'February', 12.800, 48) + TC(925.500, 911, 'March', 12.800, 34) +
  TC(783, 928.500, 'Month', 11.500, 30, 'din') + TV(541, 815, 'Sum of Units Sold', 11.500, 86, 'din'));

const prices = [79.99, 45.5, 39.99, 30.99, 30.26, 28.99, 26.49, 7.99, 6.300, 2.75];
const cost = [858, 834, 905, 1073, 1019, 1113, 1077, 1211, 1186, 1235].map((v, i) => [1103 + 31.170 * i, 250 + v / 2.24]);
const cats = [['Weatherproof Ja...', 101, 1098], ['Stainless Steel Axe', 102, 1129.500], ['Backpack', 51, 1161], ['Nylon Rope', 64, 1192], ['Water Purifier', 77, 1223], ['Multitool Survivial Knife', 131, 1254.500], ['Solar Battery Flashlight', 126, 1285.500], ['Waterproof Matches', 113, 1317], ['Duct Tape', 55, 1348], ['N95 Mask', 56, 1379]];
const pts = cost.map(p => p.join(',')).join(' ');
draw('v-price', 1000, 265, 414, 671,
  title(1010.5, 281, 'Price vs Production Cost', 187) +
  DOT(1016, 305.5, C.green) + T(1023.500, 310.500, 'Sum of Price', 13.800, 76) + DOT(1110, 305.500, C.navy) + T(1117.500, 310.500, 'Sum of Production Cost', 13.800, 143) +
  G('M1078 352.700H1406M1078 466.300H1406M1078 580H1406M1078 693.500H1406M1078 807H1406') +
  [80, 60, 40, 20, 0].map((v, i) => TR(1068, 357 + 113.600 * i, '₹ ' + v, 12.800, v ? 23 : 16)).join('') +
  prices.map((v, i) => R(1090.500 + 31.170 * i, 807 - v * 5.680, 25, v * 5.680, C.green)).join('') +
  `<polygon points="1103,807 ${pts} ${cost[9][0]},807" fill="${C.navy}" opacity=".4"/><polyline points="${pts}" fill="none" stroke="${C.navy}" stroke-width="3"/>` +
  cost.map(([x, y]) => DOT(x, y, '#bfc4d2', 2.800)).join('') +
  [['79.99', 1103, 343], ['45.5', 1134, 539], ['39.99', 1165.500, 570], ['30.99', 1196, 621], ['28.99', 1259, 632.500], ['26.49', 1290, 647], ['7.99', 1321.500, 752], ['2.75', 1383.500, 782]].map(([s, x, y]) => TC(x, y, '₹ ' + s, 12, s.length > 4 ? 38.500 : 32)).join('') +
  cats.map(([s, w, x]) => T(-w, 0, s, 12.400, w, '', `transform="translate(${x + 1.5} 818.5) rotate(-34.5)"`)).join('') +
  TC(1243, 927, 'Product Name', 14.500, 92, 'din') + TV(1018, 568, 'Sum of Price', 14.500, 82, 'ttl'));

// Visual gallery
const AX = '<path d="M1 0V22H23"/>';
const icons = [
  AX + '<path class="w" d="M2 3H8V8H2ZM2 13H11V18H2Z"/><path class="b" d="M8 3H15V8H8Z"/><path class="y" d="M11 13H20V18H11Z"/>',
  AX + '<path class="b" d="M5 7H10V15H5Z"/><path class="w" d="M5 15H10V22H5ZM15 13H20V22H15Z"/><path class="y" d="M15 3H20V13H15Z"/>',
  AX + '<path class="b" d="M1 1H22V6H1Z"/><path class="w" d="M1 6H13V11H1ZM1 16H16V20H1Z"/><path class="y" d="M1 11H10V16H1Z"/>',
  AX + '<path class="b" d="M3 2H7V22H3Z"/><path class="w" d="M7 10H12V22H7ZM17 7H21V22H17Z"/><path class="y" d="M12 13H17V22H12Z"/>',
  AX + '<path class="w" d="M2 3H7V8H2ZM2 13H13V18H2Z"/><path class="b" d="M6 3H20V8H6Z"/><path class="y" d="M13 13H20V18H13Z"/>',
  AX + '<path class="b" d="M5 2H10V17H5Z"/><path class="w" d="M5 17H10V22H5ZM15 10H20V22H15Z"/><path class="y" d="M15 3H20V10H15Z"/>',
  AX + '<path d="M1 18L9 8L14 13L22 5"/><path class="l" d="M1 15L7 11L10 13L16 5L22 13"/>',
  '<path class="y" d="M11 11L18 1L22 22H16Z"/><path class="w" d="M1 17L9 3L16 13L10 21Z"/><path class="b" d="M0 22V18L6 19L14 10L22 22Z"/>',
  AX + '<path class="b" d="M2 4L8 9L15 3L22 6V16L14 14L8 19L2 13Z"/>',
  AX + '<path class="b" d="M2 4H22V18L16 12L8 19L2 13Z"/>',
  AX + '<path class="b" d="M5 3H10V17H5Z"/><path class="y" d="M15 3H20V10H15Z"/><path class="w" d="M15 10H20V22H15ZM5 17H10V22H5Z"/><path d="M1 20L10 12L15 16L22 9"/>',
  AX + '<path class="b" d="M4 12H9V22H4Z"/><path class="w" d="M9 2H14V22H9Z"/><path class="y" d="M14 7H20V22H14Z"/><path d="M1 20L10 13L15 18L22 9"/>',
  AX + '<path class="o" d="M2 11H8L12 13L16 11H22V21H2Z"/><path class="y" d="M2 4C7 4 8 8 12 8C16 8 17 4 22 3V9C18 9 16 13 12 13C8 13 6 9 2 9Z"/><path class="b" d="M2 9C7 9 8 16 12 16C16 16 18 9 22 8V12C18 12 17 20 12 20C7 20 6 13 2 13Z"/>',
  AX + '<path class="w" d="M4 4H8V22H4ZM18 2H22V22H18Z"/><path class="y" d="M8 7H13V13H8Z"/><path class="b" d="M13 2H17V13H13Z"/><path class="w" d="M8 13H13V22H8Z"/>',
  '<path class="b" d="M1 2H22V8H1ZM4 8H19V15H4ZM8 15H15V21H8Z"/>',
  AX + '<path class="d" d="M16 2H20V6H16ZM4 16H8V20H4Z"/><path fill="#4a9de0" stroke="none" d="M4 5H8V9H4ZM11 9H14V13H11ZM16 14H20V18H16Z"/>',
  '<circle class="w" cx="11.500" cy="11.500" r="11"/><path class="b" d="M11.500 0.500A11 11 0 0 1 19.500 19.500L11.500 11.500Z"/>',
  '<circle cx="11.500" cy="11.500" r="8.500" stroke-width="6" stroke="#1668b3"/><circle cx="11.500" cy="11.500" r="8.500" stroke-width="4" stroke="#7ab8ea"/><path class="w" d="M11 .6A11 11 0 0 0 .8 11H6A6 6 0 0 1 11 6Z"/>',
  '<path class="w" d="M1 1H22V22H1Z"/><path class="b" d="M1 1H11V22H1ZM1 11H11"/><path d="M11 7H22M17 7V1M11 14H22M17 14V22"/>',
  '<circle class="w" cx="12" cy="10" r="7"/><path d="M7 1C1 4 2 14 8 17C12 20 17 19 19 16M12 18V22M6 22H18"/><path d="M8 6L13 5L15 9L11 11L9 15L7 10ZM15 12L17 11L16 15Z" fill="#2e9a4c" stroke="none"/>',
  '<path class="y" d="M1 3L8 4L12 2H22V12L16 20L9 21L2 15Z"/><path class="b" d="M1 3L9 4V12H2ZM14 12L21 10V14L15 20H12V14Z"/>',
  '<path d="M14 0L1 20L12 15Z" fill="#4db5dd" stroke="none"/><path d="M14 0L21 23L12 15Z" fill="#1784b0" stroke="none"/>',
  '<path class="w" d="M1 17A11 11 0 0 1 23 17H17A5 5 0 0 0 7 17Z"/><path class="b" d="M8 6.500A11 11 0 0 1 23 17H17A5 5 0 0 0 12 12Z"/><path d="M8 9L12 16"/>',
  '<path class="w" d="M1 3H22V20H1Z"/><text x="3" y="14">123</text><path d="M4 17H17" stroke="#8a8886"/>',
  '<path class="w" d="M1 1H22V22H1Z"/><path d="M5 4V19M7 9H16M7 17H13"/><path d="M7 6H19M7 14H18" stroke="#1668b3" stroke-width="2.500"/>',
  '<path class="w" d="M1 2H22V20H1Z"/><path d="M3 13L7 5L11 13Z" fill="#3d9c55" stroke="none"/><path d="M12 5H20L16 12Z" fill="#d83b3b" stroke="none"/><path d="M4 17H19" stroke="#8a8886"/>',
  '<path class="w" d="M11 21H1V1H22V10"/><path d="M1 4H22" stroke-width="3" stroke="#8a8886"/><path class="y" d="M5 8H8V11H5ZM5 15H8V18H5Z"/><path class="w" d="M11 12H23V14L19 18V23H15V18L11 14Z"/>',
  '<path class="w" d="M1 1H22V22H1Z"/><path d="M1 3H22" stroke="#8a8886" stroke-width="3"/><path d="M1 6H22M1 11H22M1 17H22M8 5V22M15 5V22" stroke-width="1"/>',
  '<path class="w" d="M1 1H22V22H1Z"/><path class="b" d="M15 6H22V22H1V15H15Z"/><path d="M1 3H22" stroke="#8a8886" stroke-width="3"/><path d="M1 6H22M1 11H22M1 16H22M8 5V22M15 5V22" stroke-width="1"/>',
  '<text x="4" y="18" class="big">R</text>',
  '<text x="-1" y="18" class="big">Py</text>',
  AX + '<path d="M1 5H15M1 12H11M1 18H7" stroke-width="1.200"/><circle class="b" cx="18" cy="5" r="3"/><circle class="y" cx="12" cy="11.500" r="2"/><circle class="y" cx="8" cy="17" r="2"/>',
  '<path d="M9 11H12M17 3H12V19H17M12 11H17"/><path class="b" d="M0 9H9V14H0ZM15 1H22V6H15ZM15 9H22V14H15ZM15 17H22V22H15Z"/>',
  '<path class="bub" d="M1 2H22V17H11L6 22V17H1Z"/>',
  '<path class="w" d="M3 6V1H15L20 6V22H3V13M14 1V7H20"/><circle class="b" cx="3" cy="9" r="2.500"/><path class="l" d="M8 10H14M6 15H10M12 15H17"/>',
  '<path class="w" d="M6 2H17V10C17 16 6 16 6 10ZM6 4H1C1 9 3 11 6 11M17 4H22C22 9 20 11 17 11"/><path class="b" d="M6 1H17V4H6ZM6 19H17V22H6Z"/><path d="M10 15V19H13V15"/>',
  '<path class="w" d="M3 0H14L20 6V23H3ZM14 0V6H20"/><path class="d" d="M6 15H9V20H6ZM10 17H13V20H10ZM14 11H17V20H14Z"/>',
  '<path class="w" d="M12 3H22V20H2V14"/><text x="5" y="15">123</text><path d="M4 17.500H15" stroke="#8a8886"/><path class="o" d="M3 0H10L7 5H11L1 14L4 7H0Z"/>',
  '<path class="y" d="M12 2H21V9H12ZM2 15H9V22H2Z"/><path class="w" d="M12 12H23V14L19 18V23H16V18L12 14Z"/><path class="o" d="M3 0H10L7 5H11L1 14L4 7H0Z"/>',
  '<path class="b" d="M5 2H22V22H2V12Z"/><path class="w" d="M17 3H21V6L18 7L17 12L12 15L11 20H7L9 13L14 11Z" stroke="none"/><path d="M0 3C0 -1 7 -1 7 3V9L3.500 13L0 9Z" fill="#d8690a" stroke="none"/><circle cx="18.500" cy="20" r="3.500" fill="#d8690a" stroke="#f3f2f1"/><circle cx="22" cy="14" r="2.300" fill="#d8690a" stroke="none"/>',
  '<path d="M6 5.500L11.500 11.500L6 17.500L1 11.500ZM17 5.500L22 11.500L17 17.500L11.500 11.500ZM6 5.500L9 1H14L17 5.500M6 17.500L9 22H14L17 17.500M9 1L14.500 8M14 22L8.500 15" stroke="#8e3a9d"/>',
  '<path d="M1 2H14L22 11.500L14 21H1L9 11.500Z" stroke="#1478d4" fill="#f5faff"/><path d="M8 2L16 11.500L8 21M16 4.500L4 19M9 11.500L13 6.500" stroke="#1478d4"/>'
];
document.getElementById('vgrid').innerHTML = icons.map(s => `<svg viewBox="-0.500 -0.500 24 24">${s}</svg>`).join('');

// Field list: '>' table, '+' numeric field, '#' date hierarchy
const fields = ['>Apocolypse Product ...', '+Price', 'Product ID', 'Product Name', '+Production Co...', '>Apocolypse Sales', '#Date Purchased', '+Order ID', 'Product ID', 'Store Id', 'Store Name', '+Units Sold', '>Buyer Information', '+Age', '+Buyer ID', 'Product ID Pu...', 'State', '+Store ID', '+Total Purchased', '>Store Information', 'Address', 'City', 'State'];
const DOWN = '<svg width="14" height="9" viewBox="0 0 14 9"><path d="M0.500 1L7 8L13.500 1" stroke-width="1"/></svg>';
const TBL = '<svg width="16" height="16" viewBox="0 0 16 16"><rect x="1" y="1" width="14" height="14" rx="2.500"/><path d="M5.500 1V15M10.500 1V15M1 5.500H15M1 10.500H15"/></svg>';
const SIG = '<svg width="14" height="16" viewBox="0 0 14 16"><path d="M13 1.200H1L7.500 8L1 14.800H13.500"/></svg>';
const CAL = '<svg width="16" height="16" viewBox="0 0 16 16"><rect x="1" y="1" width="14" height="14" rx="3"/><path d="M1 4.800H15"/><path d="M4 8.500H12.500M4 11.500H10" stroke-width="1.800" stroke-dasharray="2 1.500"/></svg>';
document.getElementById('tree').innerHTML = fields.map(f => {
  const k = f[0], s = '>+#'.includes(k) ? f.slice(1) : f;
  if (k === '>') return `<div class="tb">${DOWN}${TBL}<span>${s}</span></div>`;
  const mark = k === '+' ? SIG : k === '#' ? CAL : '';
  const lead = k === '#' ? '<svg width="9" height="15" viewBox="0 0 9 15"><path d="M1 1L8 7.500L1 14" stroke-width="1"/></svg>' : '';
  return `<div class="fd${lead ? ' ex' : ''}">${lead}<span class="chk"></span><span class="slot">${mark}</span><span>${s}</span></div>`;
}).join('');
```
